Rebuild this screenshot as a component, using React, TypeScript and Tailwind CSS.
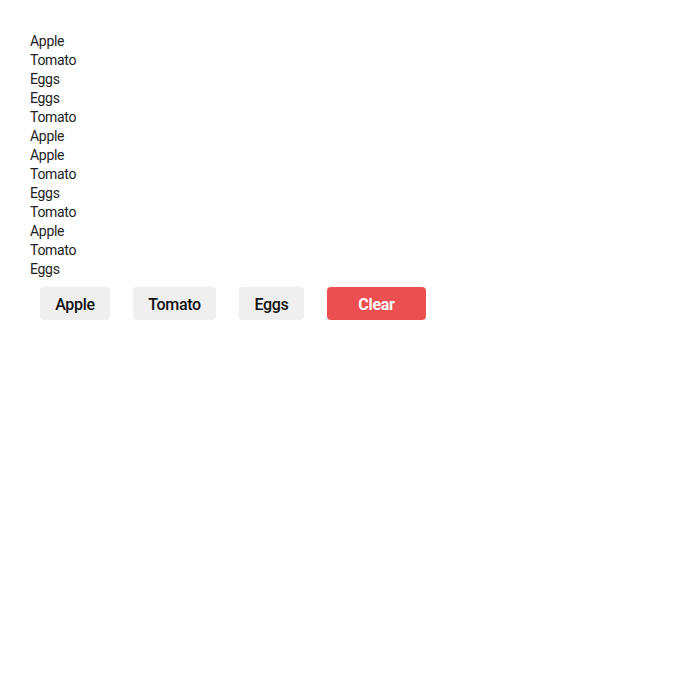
import React from "react";

const items = ["Apple","Tomato","Eggs","Eggs","Tomato","Apple","Apple","Tomato","Eggs","Tomato","Apple","Tomato","Eggs"];

export default function App() {
  return (
    <div className="bg-white min-h-[683px] pt-[32px] pl-[30px]" style={{ fontFamily: "Roboto, 'Liberation Sans', sans-serif" }}>
      <div className="flex flex-col text-[14px] leading-[19px] text-[#222] tracking-[-0.3px]">
        {items.map((it, i) => (
          <div key={i}>{it}</div>
        ))}
      </div>
      <div className="flex gap-[23px] ml-[10px] mt-[8px]">
        <button className="h-[33px] w-[70px] pt-[3px] rounded-[4px] bg-[#efefef] text-[16px] font-medium text-[#111] tracking-[-0.3px]">Apple</button>
        <button className="h-[33px] w-[83px] pt-[3px] rounded-[4px] bg-[#efefef] text-[16px] font-medium text-[#111] tracking-[-0.3px]">Tomato</button>
        <button className="h-[33px] w-[65px] pt-[3px] rounded-[4px] bg-[#efefef] text-[16px] font-medium text-[#111] tracking-[-0.3px]">Eggs</button>
        <button className="h-[33px] w-[99px] pt-[3px] rounded-[4px] bg-[#ec4f4f] text-[16px] font-bold text-white tracking-[-0.3px]">Clear</button>
      </div>
    </div>
  );
}
